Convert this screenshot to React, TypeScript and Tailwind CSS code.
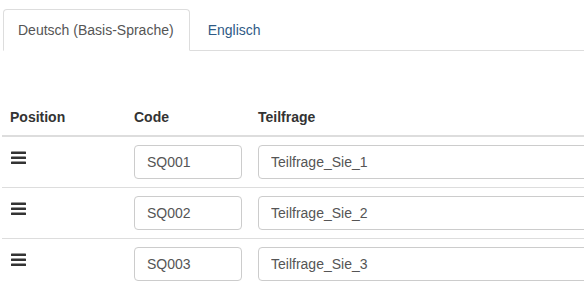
const rows = [
  { code: "SQ001", text: "Teilfrage_Sie_1" },
  { code: "SQ002", text: "Teilfrage_Sie_2" },
  { code: "SQ003", text: "Teilfrage_Sie_3" },
];

function Bars() {
  return (
    <svg width="15" height="14" viewBox="0 0 15 14" className="mt-[6px] ml-[1px]">
      <rect x="0" y="0.5" width="15" height="2.6" rx="0.6" fill="#333" />
      <rect x="0" y="5.5" width="15" height="2.6" rx="0.6" fill="#333" />
      <rect x="0" y="10.5" width="15" height="2.6" rx="0.6" fill="#333" />
    </svg>
  );
}

export default function App() {
  return (
    <div className="w-[584px] h-[301px] overflow-hidden bg-white font-['Liberation_Sans',Arial,sans-serif] text-[14px] leading-5 text-[#333]">
      {/* language tabs */}
      <div className="pt-[9px] pl-[3px]">
        <ul className="flex border-b border-[#ddd]">
          <li className="-mb-px rounded-t-[4px] border border-[#ddd] border-b-white bg-white py-[10px] pl-[14px] pr-[15px] text-[#555]">
            Deutsch (Basis-Sprache)
          </li>
          <li className="-mb-px ml-[2px] border border-transparent py-[10px] pl-[15px] pr-[15px] text-[#2f5a85]">
            Englisch
          </li>
        </ul>
      </div>

      {/* subquestions table */}
      <div className="mt-[48px] ml-[2px] w-[760px]">
        <div className="grid grid-cols-[124px_124px_1fr] border-b-2 border-[#ddd] font-bold">
          <div className="p-2">Position</div>
          <div className="p-2">Code</div>
          <div className="p-2">Teilfrage</div>
        </div>
        {rows.map((row, index) => (
          <div
            key={index}
            className={`grid grid-cols-[124px_124px_1fr] ${
              index < rows.length - 1 ? "border-b border-[#ddd]" : ""
            }`}
          >
            <div className="p-2">
              <Bars />
            </div>
            <div className="p-2">
              <input
                readOnly
                value={row.code}
                className="block h-[34px] w-full rounded-[4px] border border-[#ccc] px-3 text-[14px] text-[#555] outline-none"
              />
            </div>
            <div className="p-2">
              <input
                readOnly
                value={row.text}
                className="block h-[34px] w-full rounded-[4px] border border-[#ccc] px-3 text-[14px] text-[#555] outline-none"
              />
            </div>
          </div>
        ))}
      </div>
    </div>
  );
}
